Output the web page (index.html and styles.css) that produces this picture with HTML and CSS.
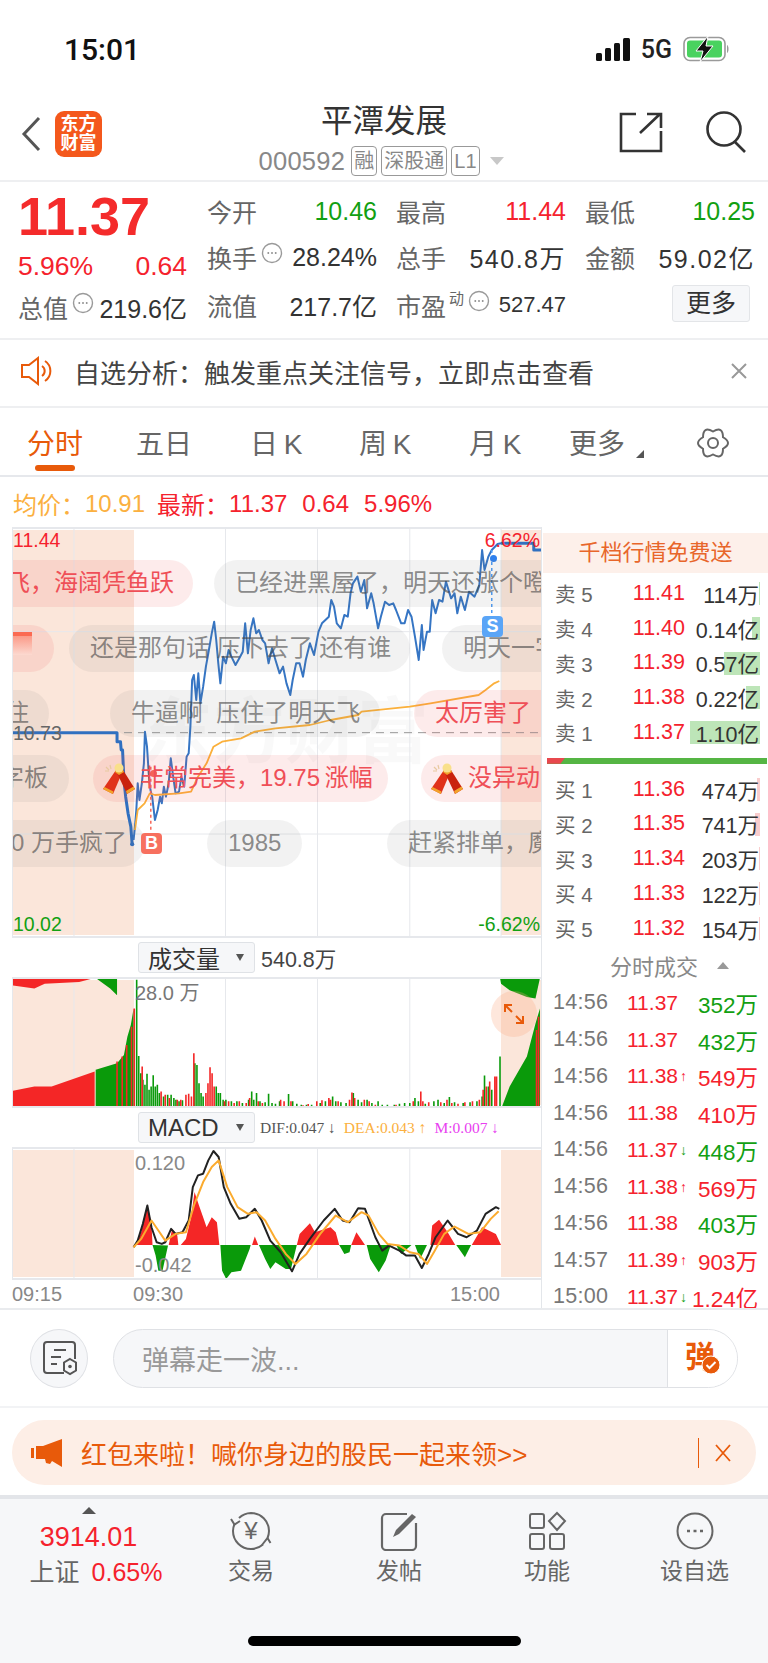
FILE: index.html
```html
<!DOCTYPE html>
<html lang="zh-CN">
<head>
	<meta charset="UTF-8">
	<title>平潭发展</title>
	<link rel="stylesheet" href="styles.css">
</head>
<body>
	<svg class="defs" width="0" height="0">
		<symbol id="dots" viewBox="0 0 22 22">
			<circle cx="11" cy="11" r="9.5" fill="none" stroke="#9a9a9a" stroke-width="1.4"/>
			<path d="M6.5 11h1.6M10.2 11h1.6M13.9 11h1.6" stroke="#777" stroke-width="1.6"/>
		</symbol>
		<symbol id="cracker" viewBox="0 0 32 32">
			<path d="M3 4l3 3M7 2l1 4M2 8l4 0" stroke="#e8c9a0" stroke-width="1.2"/>
			<path d="M13 7l6 3-9 21-10-5z" fill="#e0321a"/>
			<path d="M14 10l6-3 12 19-8 5z" fill="#c9220e"/>
			<path d="M1.500 24l9 4.500-1 2.500-9.500-5zM23 28l7.500-4.500 1.500 2.500-8 5z" fill="#f2a32c"/>
			<path d="M12 9l4 3 5-3-1-2h-7z" fill="#f2a32c"/>
			<circle cx="16" cy="5" r="4.500" fill="#f9e08a"/>
		</symbol>
	</svg>

	<!-- 状态栏 -->
	<div class="status">
		<span class="status-time">15:01</span>
		<svg class="signal" width="35" height="23" viewBox="0 0 35 23">
			<rect x="0" y="15" width="6" height="8" rx="1.5"/>
			<rect x="9" y="10" width="6" height="13" rx="1.5"/>
			<rect x="18" y="5" width="6" height="18" rx="1.5"/>
			<rect x="27" y="0" width="7" height="23" rx="1.5"/>
		</svg>
		<span class="status-net">5G</span>
		<svg class="battery" width="47" height="26" viewBox="0 0 47 26">
			<rect x="1" y="1.500" width="41" height="23" rx="6" fill="none" stroke="#9a9a9a" stroke-width="1.6"/>
			<rect x="4" y="4.500" width="35" height="17" rx="3" fill="#49d25f"/>
			<path d="M44 9c2 .5 2 7.500 0 8z" fill="#9a9a9a"/>
			<path d="M25 0L13 15h7l-3 11 13-16h-7z" fill="#111" stroke="#fff" stroke-width="1"/>
		</svg>
	</div>

	<!-- 顶部导航 -->
	<div class="nav">
		<svg class="nav-back" width="22" height="36" viewBox="0 0 22 36">
			<path d="M19 2L4 18l15 16" fill="none" stroke="#555" stroke-width="3"/>
		</svg>
		<div class="nav-logo">东方<br>财富</div>
		<div class="nav-title">
			<h1>平潭发展</h1>
			<div class="nav-sub">
				<span class="nav-code">000592</span>
				<span class="tag">融</span>
				<span class="tag">深股通</span>
				<span class="tag">L1</span>
				<i class="nav-arrow"></i>
			</div>
		</div>
		<svg class="nav-share" width="44" height="42" viewBox="0 0 44 42">
			<path d="M17 3H2v37h40V20M21 22L41 3M28 3h14v14" fill="none" stroke="#333" stroke-width="2.600"/>
		</svg>
		<svg class="nav-search" width="44" height="42" viewBox="0 0 44 42">
			<circle cx="20" cy="18" r="16.500" fill="none" stroke="#333" stroke-width="2.600"/>
			<path d="M31 31l10 10" stroke="#333" stroke-width="2.600"/>
		</svg>
	</div>

	<!-- 行情 -->
	<div class="quote">
		<div class="quote-main">
			<div class="quote-price">11.37</div>
			<div class="quote-change"><span>5.96%</span><span>0.64</span></div>
			<div class="cell cell-total"><span class="lbl">总值</span><svg class="dots"><use href="#dots"/></svg><span class="val">219.6亿</span></div>
		</div>
		<div class="quote-grid">
			<div class="cell"><span class="lbl">今开</span><span class="val down">10.46</span></div>
			<div class="cell"><span class="lbl">最高</span><span class="val up">11.44</span></div>
			<div class="cell"><span class="lbl">最低</span><span class="val down">10.25</span></div>
			<div class="cell"><span class="lbl">换手</span><svg class="dots"><use href="#dots"/></svg><span class="val">28.24%</span></div>
			<div class="cell"><span class="lbl">总手</span><span class="val val-wide">540.8万</span></div>
			<div class="cell"><span class="lbl">金额</span><span class="val val-wide">59.02亿</span></div>
			<div class="cell"><span class="lbl">流值</span><span class="val">217.7亿</span></div>
			<div class="cell"><span class="lbl">市盈</span><sup class="lbl-sup">动</sup><svg class="dots"><use href="#dots"/></svg><span class="val val-small">527.47</span></div>
			<div class="cell cell-more"><span class="more-btn">更多</span></div>
		</div>
	</div>

	<!-- 提示 -->
	<div class="notice">
		<svg class="notice-icon" width="35" height="30" viewBox="0 0 35 30">
			<path d="M2 9h7l9-7v26l-9-7H2z" fill="none" stroke="#e85a0a" stroke-width="2"/>
			<path d="M22 10a6 6 0 010 10M25 5a12 12 0 010 20" fill="none" stroke="#e85a0a" stroke-width="2"/>
		</svg>
		<span class="notice-text">自选分析：触发重点关注信号，立即点击查看</span>
		<svg class="notice-close" width="18" height="18" viewBox="0 0 18 18">
			<path d="M2 2l14 14M16 2L2 16" stroke="#999" stroke-width="2"/>
		</svg>
	</div>

	<!-- 周期切换 -->
	<div class="tabs">
		<span class="tab tab-on">分时</span>
		<span class="tab tab-5">五日</span>
		<span class="tab tab-k tab-d">日 K</span>
		<span class="tab tab-k tab-w">周 K</span>
		<span class="tab tab-k tab-m">月 K</span>
		<span class="tab tab-x">更多</span>
		<i class="tab-corner"></i>
		<svg class="tab-gear" width="34" height="34" viewBox="0 0 34 34">
			<path d="M17 5.500Q27 -.3 27 11.250Q37 17 27 22.750Q27 34.300 17 28.500Q7 34.300 7 22.750Q-3 17 7 11.250Q7 -.3 17 5.500z" fill="none" stroke="#666" stroke-width="2"/>
			<circle cx="17" cy="17" r="5" fill="none" stroke="#666" stroke-width="2"/>
		</svg>
	</div>

	<div class="info">
		<span class="avg">均价：</span><span class="avg info-num">10.91</span>
		<span class="up info-new">最新：</span><span class="up info-num">11.37</span>
		<span class="up info-gap">0.64</span><span class="up info-gap">5.96%</span>
	</div>

	<div class="board">
		<div class="charts">
			<!-- 分时图 -->
			<div class="chart chart-main">
				<i class="zone zone-l"></i><i class="zone zone-r"></i>
				<div class="watermark">东方财富</div>
				<svg class="plot" viewBox="35 21 1536 1233" preserveAspectRatio="none">
					<g class="grid-line">
						<path d="M215 21V1254M655 21V1254M922 21V1254M1190 21V1254M1455 21V1254M35 335H1571M35 942H1571"/>
					</g>
					<path class="mid-line" d="M35 638H1571"/>
					<path class="line-thick" d="M36 638H340V665H350L352 690H356L360 780 365 830 372 880 380 920 384 975"/>
					<circle cx="384" cy="973" r="6" fill="#3070c0"/>
					<path class="line-price" d="M388 960L392 920 396 870 400 790 405 840 412 790 418 730 421 635 427 680 432 760 437 810 442 830 450 900 458 870 465 830 470 850 476 800 482 830 490 790 496 715 503 770 510 820 520 815 527 770 535 800 542 710 548 700 553 620 558 480 563 465 570 540 576 460 582 550 590 500 598 440 605 400 615 340 622 305 628 360 634 430 640 490 648 410 656 430 664 390 672 410 684 435 695 415 705 395 712 310 720 400 728 330 736 295 744 340 752 330 762 360 770 370 780 430 790 385 800 420 812 460 822 440 832 490 843 525 850 480 860 430 870 430 880 470 888 420 900 370 912 405 925 335 935 310 945 300 955 290 962 240 970 260 978 310 990 325 1000 285 1010 290 1018 220 1025 190 1038 170 1048 215 1058 180 1066 265 1078 220 1085 250 1098 325 1106 290 1118 245 1130 255 1142 250 1150 270 1165 310 1175 310 1185 270 1195 290 1205 350 1216 420 1225 315 1230 390 1240 335 1248 335 1255 240 1265 280 1275 240 1285 245 1295 185 1310 235 1320 220 1328 280 1338 230 1350 270 1362 215 1378 230 1392 195 1400 90 1407 150 1418 110 1428 90 1445 72 1455 70"/>
					<path class="line-thick" d="M1455 70H1550V90H1571"/>
					<path class="line-avg" d="M392 930L400 870 420 850 435 820 450 825 520 820 555 815 575 770 600 730 620 680 645 665 700 655 740 635 800 625 900 615 960 600 1040 585 1050 575 1190 560 1250 550 1390 525 1410 510 1435 490 1450 483"/>
					<path class="mark-sell" d="M1428 90V285"/>
					<path class="mark-buy" d="M438 740V935"/>
				</svg>
				<i class="dot dot-s"></i><i class="dot dot-b"></i>
				<span class="flag flag-s">S</span>
				<span class="flag flag-b">B</span>
				<span class="axis up axis-tl">11.44</span>
				<span class="axis axis-ml">10.73</span>
				<span class="axis down axis-bl">10.02</span>
				<span class="axis up axis-tr">6.62%</span>
				<span class="axis down axis-br">-6.62%</span>
				<!-- 弹幕 -->
				<div class="dm dm-red p1">飞，海阔凭鱼跃</div>
				<div class="dm p2">已经进黑屋了，明天还涨个噔</div>
				<div class="dm dm-red p3"><i class="dm-gift"></i></div>
				<div class="dm p4">还是那句话 压下去了 还有谁</div>
				<div class="dm p5">明天一字</div>
				<div class="dm p6">住</div>
				<div class="dm p7">牛逼啊&nbsp;&nbsp;压住了明天飞</div>
				<div class="dm dm-red p8">太厉害了</div>
				<div class="dm p9">字板</div>
				<div class="dm dm-red p10"><svg class="dm-icon"><use href="#cracker"/></svg>非常完美，19.75&#8201;涨幅</div>
				<div class="dm dm-red p11"><svg class="dm-icon"><use href="#cracker"/></svg>没异动的</div>
				<div class="dm p12">10 万手疯了</div>
				<div class="dm p13">1985</div>
				<div class="dm p14">赶紧排单，魔</div>
			</div>

			<div class="sub-head">
				<div class="select"><span>成交量</span><i></i></div>
				<span class="sub-val">540.8万</span>
			</div>

			<!-- 成交量 -->
			<div class="chart chart-vol">
				<i class="zone zone-l"></i><i class="zone zone-r"></i>
				<svg class="plot" viewBox="35 140 1536 395" preserveAspectRatio="none">
					<path class="grid-line" d="M215 140V535M655 140V535M922 140V535M1190 140V535"/>
					<path fill="#f42626" d="M36 143H275L230 155 130 160 100 175 36 165zM36 483L100 470H150L275 425V530H36z"/>
					<path fill="#0a9a0a" d="M278 143H340V195L320 175zM278 420L340 400 360 375 370 320 380 285 388 235V530H278zM1452 143H1568L1555 205 1530 200 1480 180 1455 160zM1458 530L1480 470 1530 380 1555 280 1568 235V530z"/>
					<path class="bar-red" d="M340 530V395M355 530V380M368 530V345M382 530V290M1558 530V300M1564 530V260"/>
					<path class="bar-green" d="M397 530V148M403 530V378M409 530V430M415 530V450M421 530V465M427 530V432M433 530V480M439 530V470M445 530V436M451 530V470M457 530V465M463 530V490M475 530V500M487 530V495M497 530V495M505 530V505M511 530V510M520 530V515M530 530V512M566 530V400M572 530V405M578 530V460M584 530V490M590 530V500M628 530V470M634 530V490M640 530V490M648 530V510M656 530V510M672 530V515M688 530V515M704 530V520M722 530V510M731 530V485M737 530V510M745 530V490M755 530V515M770 530V518M780 530V492M790 530V520M800 530V522M812 530V515M838 530V493M850 530V515M862 530V522M875 530V525M890 530V525M905 530V525M930 530V520M945 530V515M966 530V500M975 530V515M990 530V518M1005 530V520M1026 530V490M1040 530V510M1050 530V518M1066 530V510M1080 530V520M1098 530V515M1110 530V525M1125 530V525M1145 530V525M1160 530V522M1175 530V520M1190 530V520M1205 530V505M1215 530V515M1235 530V522M1260 530V515M1272 530V510M1290 530V520M1305 530V502M1320 530V518M1345 530V520M1365 530V518M1385 530V515M1400 530V500M1407 530V437M1418 530V470M1428 530V480M1452 530V380"/>
					<path class="bar-red" d="M390 530V235M413 530V410M468 530V485M480 530V495M492 530V505M515 530V510M525 530V510M540 530V495M548 530V492M556 530V500M563 530V370M598 530V490M604 530V460M610 530V412M616 530V430M622 530V470M652 530V515M664 530V515M680 530V520M695 530V515M715 530V520M725 530V505M750 530V515M762 530V520M815 530V510M825 530V515M845 530V515M880 530V527M895 530V523M920 530V515M935 530V512M955 530V505M960 530V510M982 530V515M1015 530V510M1022 530V488M1030 530V505M1058 530V510M1072 530V515M1090 530V525M1150 530V525M1200 530V515M1222 530V485M1228 530V515M1245 530V518M1280 530V518M1298 530V510M1312 530V520M1330 530V522M1350 530V518M1372 530V515M1392 530V510M1403 530V480M1412 530V470M1422 530V455M1437 530V440M1442 530V440"/>
				</svg>
				<span class="axis axis-top">28.0 万</span>
				<div class="expand">
					<svg width="24" height="24" viewBox="0 0 24 24">
						<path d="M3 10V3h7M3 3l7 7M21 14v7h-7M21 21l-7-7" fill="none" stroke="#e85a0a" stroke-width="2"/>
					</svg>
				</div>
			</div>

			<div class="sub-head">
				<div class="select"><span>MACD</span><i></i></div>
				<div class="macd-vals">
					<span class="dif">DIF:0.047 ↓</span>
					<span class="dea">DEA:0.043 ↑</span>
					<span class="mm">M:0.007 ↓</span>
				</div>
			</div>

			<!-- MACD -->
			<div class="chart chart-macd">
				<i class="zone zone-l"></i><i class="zone zone-r"></i>
				<svg class="plot" viewBox="35 650 1536 398" preserveAspectRatio="none">
					<path class="grid-line" d="M215 650V1048M655 650V1048M922 650V1048M1190 650V1048"/>
					<path fill="#f42626" d="M395 943L410 905 428 822 440 880 443 943zM490 943L500 895 515 915 518 943zM525 943L540 925 555 860 565 785 578 825 590 860 600 890 615 860 630 875 637 943zM732 943L740 918 750 943zM862 943L870 910 900 878 915 905 930 900 960 890 975 905 985 943zM1020 943L1035 905 1060 943zM1250 943L1255 885 1275 868 1300 905 1322 943zM1370 943L1400 890 1440 910 1455 943z"/>
					<path fill="#0a9a0a" d="M443 943L452 975 460 1020 472 1020 488 945zM640 943L645 1020 657 1045 672 1025 700 1020 725 955 728 943zM752 943L770 985 785 1015 800 995 830 1015 845 1015 862 943zM985 943L1000 970 1015 965 1020 943zM1065 943L1075 985 1100 1025 1120 990 1135 943zM1150 943L1165 970 1195 943zM1205 943L1220 985 1240 943zM1325 943L1350 980 1368 943z"/>
					<path class="line-dif" d="M388 950L400 930 415 880 428 825 440 890 455 935 470 940 480 935 497 895 510 910 530 905 548 870 560 770 575 735 590 730 605 690 620 662 635 680 650 770 670 820 695 865 715 860 740 835 760 870 785 930 815 965 848 1022 870 970 900 925 940 870 972 835 995 870 1015 875 1040 833 1060 835 1090 920 1110 960 1130 945 1160 960 1180 975 1205 975 1225 1012 1245 970 1265 920 1300 870 1330 910 1355 920 1385 900 1410 850 1440 830 1450 835"/>
					<path class="line-dea" d="M388 950L410 925 440 870 460 900 480 930 510 910 540 905 565 820 590 755 615 710 635 690 660 770 690 830 720 850 745 845 770 870 800 925 830 970 858 1000 890 970 930 910 975 855 1010 875 1050 845 1070 855 1100 910 1125 940 1160 945 1190 965 1215 970 1240 1000 1260 965 1290 910 1320 888 1360 910 1395 905 1425 865 1448 842"/>
				</svg>
				<span class="axis axis-m1">0.120</span>
				<span class="axis axis-m2">-0.042</span>
			</div>

			<div class="times"><span>09:15</span><span>09:30</span><span class="time-end">15:00</span></div>
		</div>

		<!-- 盘口 -->
		<div class="side">
			<div class="promo">千档行情免费送</div>
			<div class="ob ob-sell">
				<div class="ob-row"><i class="ob-bar bar-g" style="width:1px"></i><span class="ob-l">卖 5</span><span class="up">11.41</span><span class="ob-v">114万</span></div>
				<div class="ob-row"><i class="ob-bar bar-g" style="width:8px"></i><span class="ob-l">卖 4</span><span class="up">11.40</span><span class="ob-v">0.14亿</span></div>
				<div class="ob-row"><i class="ob-bar bar-g" style="width:36px"></i><span class="ob-l">卖 3</span><span class="up">11.39</span><span class="ob-v">0.57亿</span></div>
				<div class="ob-row"><i class="ob-bar bar-g" style="width:14px"></i><span class="ob-l">卖 2</span><span class="up">11.38</span><span class="ob-v">0.22亿</span></div>
				<div class="ob-row"><i class="ob-bar bar-g" style="width:70px"></i><span class="ob-l">卖 1</span><span class="up">11.37</span><span class="ob-v">1.10亿</span></div>
			</div>
			<div class="spread"><i></i></div>
			<div class="ob">
				<div class="ob-row"><i class="ob-bar bar-r" style="width:3px"></i><span class="ob-l">买 1</span><span class="up">11.36</span><span class="ob-v">474万</span></div>
				<div class="ob-row"><i class="ob-bar bar-r" style="width:5px"></i><span class="ob-l">买 2</span><span class="up">11.35</span><span class="ob-v">741万</span></div>
				<div class="ob-row"><i class="ob-bar bar-r" style="width:1px"></i><span class="ob-l">买 3</span><span class="up">11.34</span><span class="ob-v">203万</span></div>
				<div class="ob-row"><i class="ob-bar bar-r" style="width:1px"></i><span class="ob-l">买 4</span><span class="up">11.33</span><span class="ob-v">122万</span></div>
				<div class="ob-row"><i class="ob-bar bar-r" style="width:1px"></i><span class="ob-l">买 5</span><span class="up">11.32</span><span class="ob-v">154万</span></div>
			</div>
			<div class="ticks-head">分时成交<i></i></div>
			<div class="ticks">
				<div class="tick"><span class="tick-t">14:56</span><span class="up">11.37</span><span></span><span class="tick-v down">352万</span></div>
				<div class="tick"><span class="tick-t">14:56</span><span class="up">11.37</span><span></span><span class="tick-v down">432万</span></div>
				<div class="tick"><span class="tick-t">14:56</span><span class="up">11.38</span><span class="up tick-a">↑</span><span class="tick-v up">549万</span></div>
				<div class="tick"><span class="tick-t">14:56</span><span class="up">11.38</span><span></span><span class="tick-v up">410万</span></div>
				<div class="tick"><span class="tick-t">14:56</span><span class="up">11.37</span><span class="down tick-a">↓</span><span class="tick-v down">448万</span></div>
				<div class="tick"><span class="tick-t">14:56</span><span class="up">11.38</span><span class="up tick-a">↑</span><span class="tick-v up">569万</span></div>
				<div class="tick"><span class="tick-t">14:56</span><span class="up">11.38</span><span></span><span class="tick-v down">403万</span></div>
				<div class="tick"><span class="tick-t">14:57</span><span class="up">11.39</span><span class="up tick-a">↑</span><span class="tick-v up">903万</span></div>
				<div class="tick"><span class="tick-t">15:00</span><span class="up">11.37</span><span class="down tick-a">↓</span><span class="tick-v up">1.24亿</span></div>
			</div>
		</div>
	</div>

	<!-- 弹幕输入 -->
	<div class="comment">
		<div class="comment-set">
			<svg width="36" height="36" viewBox="0 0 36 36">
				<path d="M23 33H6a3 3 0 01-3-3V5a3 3 0 013-3h25a3 3 0 013 3v14" fill="none" stroke="#555" stroke-width="2"/>
				<path d="M13 10h12M10 17h10M10 24h6" stroke="#555" stroke-width="2"/>
				<path d="M29 19l6 3.500v8L29 34l-6-3.500v-8z" fill="none" stroke="#555" stroke-width="2"/>
				<circle cx="29" cy="26.500" r="1.800" fill="#555"/>
			</svg>
		</div>
		<div class="comment-box">
			<span class="comment-hint">弹幕走一波...</span>
			<span class="comment-send">弹<svg width="20" height="20" viewBox="0 0 20 20"><circle cx="10" cy="10" r="9" fill="#e85a0a" stroke="#fff" stroke-width="1"/><path d="M5.500 10l3 3 6-6" fill="none" stroke="#fff" stroke-width="2"/></svg></span>
		</div>
	</div>

	<!-- 红包 -->
	<div class="banner-wrap">
		<div class="banner">
			<svg class="banner-icon" width="32" height="28" viewBox="0 0 32 28">
				<path d="M0 9h3v10H0zM5 7h7L31 0v28l-10-6-2 3-4-1-1-4H5z" fill="#e85a0a"/>
			</svg>
			<span class="banner-text">红包来啦！喊你身边的股民一起来领&gt;&gt;</span>
			<i class="banner-sep"></i>
			<svg width="16" height="18" viewBox="0 0 16 18">
				<path d="M1 1l14 16M15 1L1 17" stroke="#e85a0a" stroke-width="1.800"/>
			</svg>
		</div>
	</div>

	<!-- 底部 -->
	<div class="foot">
		<div class="foot-index">
			<i></i>
			<div class="foot-point">3914.01</div>
			<div class="foot-pct"><span>上证</span><b>0.65%</b></div>
		</div>
		<div class="foot-item">
			<svg width="44" height="40" viewBox="0 0 44 40">
				<path d="M10 7A18 18 0 0122 2a18 18 0 0118 18 18 18 0 01-1.500 7M34 33.500A18 18 0 0122 38 18 18 0 014 20a18 18 0 011.500-7" fill="none" stroke="#666" stroke-width="2"/>
				<path d="M2 8l3.500 5.500L11 10M33 34l5.500-7 3 5" fill="none" stroke="#666" stroke-width="2"/>
				<text x="22" y="28" text-anchor="middle" class="yen">¥</text>
			</svg>
			<span>交易</span>
		</div>
		<div class="foot-item">
			<svg width="44" height="40" viewBox="0 0 44 40">
				<path d="M30 3H9a4 4 0 00-4 4v28a4 4 0 004 4h26a4 4 0 004-4V12" fill="none" stroke="#666" stroke-width="2.200"/>
				<path d="M16 26L19 19 35 3 39 6 22 23z" fill="#666"/>
			</svg>
			<span>发帖</span>
		</div>
		<div class="foot-item">
			<svg width="44" height="40" viewBox="0 0 44 40">
				<rect x="5" y="3" width="14" height="14" rx="2" fill="none" stroke="#666" stroke-width="2"/>
				<rect x="5" y="23" width="14" height="15" rx="2" fill="none" stroke="#666" stroke-width="2"/>
				<rect x="25" y="23" width="14" height="15" rx="2" fill="none" stroke="#666" stroke-width="2"/>
				<path d="M32 2l8 8-8 9-8-9z" fill="none" stroke="#666" stroke-width="2"/>
			</svg>
			<span>功能</span>
		</div>
		<div class="foot-item">
			<svg width="44" height="40" viewBox="0 0 44 40">
				<circle cx="22" cy="20" r="17.500" fill="none" stroke="#666" stroke-width="2"/>
				<path d="M14 20h3M20.500 20h3M27 20h3" stroke="#666" stroke-width="2.600"/>
			</svg>
			<span>设自选</span>
		</div>
		<i class="home-bar"></i>
	</div>
</body>
</html>
```

FILE: styles.css
```css
* {
	box-sizing: border-box;
}
html, body {
	margin: 0;
	padding: 0;
}
body {
	position: relative;
	width: 768px;
	height: 1663px;
	overflow: hidden;
	background: #fff;
	font-family: "Liberation Sans", "Noto Sans CJK SC", sans-serif;
	color: #333;
}
i {
	display: block;
	font-style: normal;
}
.defs {
	position: absolute;
}
.up { color: #f5222d; }
.down { color: #12a012; }

/* 状态栏 */
.status {
	display: flex;
	align-items: center;
	height: 90px;
	padding: 8px 38px 0 64px;
}
.status-time {
	margin-right: auto;
	font-family: Roboto, sans-serif;
	font-size: 30px;
	font-weight: 500;
	color: #111;
}
.signal { fill: #111; }
.status-net {
	margin: 0 11px 0 10px;
	font-family: Roboto, sans-serif;
	font-size: 25px;
	font-weight: 500;
	color: #222;
}

/* 导航 */
.nav {
	position: relative;
	display: flex;
	align-items: center;
	height: 92px;
	padding: 0 22px 0 20px;
	border-bottom: 2px solid #eeeff1;
}
.nav-logo {
	width: 47px;
	height: 46px;
	margin-left: 13px;
	margin-top: -2px;
	padding-top: 4px;
	border-radius: 9px;
	background: #f4581c;
	color: #fff;
	font-size: 18px;
	font-weight: 700;
	line-height: 19px;
	text-align: center;
}
.nav-back {
	margin-top: -2px;
}
.nav-title {
	position: absolute;
	left: 0;
	right: 0;
	top: 12px;
	text-align: center;
}
.nav-title h1 {
	margin: 0;
	font-size: 31.500px;
	font-weight: 400;
	line-height: 38px;
	color: #333;
}
.nav-sub {
	display: flex;
	align-items: center;
	justify-content: center;
	gap: 4px;
	margin-top: 6px;
	padding-right: 6px;
	color: #888;
}
.nav-code {
	margin-right: 2px;
	font-size: 25.500px;
	letter-spacing: .3px;
}
.tag {
	height: 30px;
	padding: 0 2px;
	border: 1px solid #999;
	border-radius: 4px;
	font-size: 20px;
	line-height: 28px;
}
.nav-arrow {
	width: 0;
	height: 0;
	margin-left: 6px;
	border-left: 7px solid transparent;
	border-right: 7px solid transparent;
	border-top: 8px solid #c8c8c8;
}
.nav-share {
	margin-left: auto;
	margin-top: -6px;
}
.nav-search {
	margin-left: 41px;
	margin-right: -2px;
	margin-top: -6px;
}

/* 行情 */
.quote {
	display: flex;
	height: 158px;
	padding: 0 13px 0 18px;
	border-bottom: 2px solid #eeeff1;
}
.quote-main {
	width: 170px;
	margin-right: 20px;
}
.quote-price {
	height: 60px;
	margin-top: 4px;
	font-size: 54px;
	font-weight: 700;
	line-height: 60px;
	color: #f42b2b;
}
.quote-change {
	display: flex;
	justify-content: space-between;
	height: 24px;
	margin-top: 8px;
	font-size: 26.500px;
	line-height: 24px;
	color: #f5222d;
}
.cell {
	display: flex;
	align-items: center;
	font-size: 25px;
	white-space: nowrap;
}
.cell-total {
	margin-top: 10px;
	height: 38px;
}
.quote-grid {
	display: grid;
	flex: 1;
	grid-template-columns: 170px 170px 170px;
	grid-template-rows: 44px 48px 48px;
	column-gap: 19px;
	padding-top: 7px;
}
.lbl { color: #666; }
.lbl-sup {
	margin: -16px 0 0 3px;
	font-size: 15px;
	color: #666;
}
.val {
	margin-left: auto;
	font-size: 25px;
	color: #333;
}
.val.up { color: #f5222d; }
.val.down { color: #12a012; }
.val-wide {
	letter-spacing: 1.500px;
}
.val-small {
	font-size: 22px;
}
.dots {
	width: 22px;
	height: 22px;
	margin: -8px 0 0 4px;
	flex: none;
}
.cell-more {
	justify-content: flex-end;
	padding-right: 5px;
}
.more-btn {
	display: block;
	width: 78px;
	height: 37px;
	margin-top: -3px;
	border: 1px solid #e3e5e8;
	border-radius: 3px;
	background: #f6f7f9;
	font-size: 25px;
	line-height: 35px;
	text-align: center;
}

/* 提示 */
.notice {
	display: flex;
	align-items: center;
	height: 68px;
	padding: 0 20px 4px;
	border-bottom: 2px solid #eeeff1;
}
.notice-text {
	margin-left: 19px;
	font-size: 26px;
	color: #444;
	white-space: nowrap;
}
.notice-close {
	margin-left: auto;
}

/* 周期 */
.tabs {
	position: relative;
	height: 69px;
	border-bottom: 2px solid #e6e8ec;
}
.tab {
	position: absolute;
	top: 17px;
	font-size: 28px;
	line-height: 40px;
	color: #666;
	white-space: nowrap;
}
.tab-k {
	letter-spacing: -1px;
}
.tab-on {
	left: 27px;
	color: #e85a0a;
}
.tab-on::after {
	content: "";
	display: block;
	width: 40px;
	height: 6px;
	margin: 0 0 0 8px;
	border-radius: 3px;
	background: #e85a0a;
}
.tab-5 { left: 136px; }
.tab-d { left: 250px; }
.tab-w { left: 359px; }
.tab-m { left: 469px; }
.tab-x { left: 569px; }
.tab-corner {
	position: absolute;
	left: 636px;
	top: 42px;
	width: 0;
	height: 0;
	border-left: 8px solid transparent;
	border-bottom: 8px solid #555;
}
.tab-gear {
	position: absolute;
	left: 696px;
	top: 18px;
}
.info {
	display: flex;
	align-items: center;
	height: 50px;
	padding: 3px 0 0 13px;
	font-size: 24px;
	white-space: nowrap;
}
.avg { color: #fbb040; }
.info-new { margin-left: 12px; }
.info-gap { margin-left: 15px; }

/* 图表区 */
.board {
	display: flex;
	height: 783px;
	padding-left: 12px;
	border-bottom: 2px solid #e9ebee;
}
.charts {
	width: 529px;
	flex: none;
}
.chart {
	position: relative;
	overflow: hidden;
	border-left: 1px solid #e6e8ec;
}
.chart-main {
	height: 411px;
	border-top: 2px solid #e6e8ec;
	border-bottom: 2px solid #e6e8ec;
}
.chart-vol {
	height: 131px;
	border-top: 2px solid #e6e8ec;
	border-bottom: 2px solid #e6e8ec;
}
.chart-macd {
	height: 133px;
	border-top: 2px solid #e6e8ec;
	border-bottom: 2px solid #e6e8ec;
}
.zone {
	position: absolute;
	top: 1px;
	bottom: 1px;
	background: #fbe6da;
}
.zone-l {
	left: 0;
	width: 121px;
}
.zone-r {
	left: 488px;
	right: 0;
}
.plot {
	position: absolute;
	left: -1px;
	top: -2px;
	width: 529px;
	height: calc(100% + 4px);
}
.plot path {
	vector-effect: non-scaling-stroke;
	stroke-linejoin: round;
}
.grid-line, .grid-line path {
	fill: none;
	stroke: #e6e8ec;
	stroke-width: 1;
}
.mid-line {
	fill: none;
	stroke: #999;
	stroke-width: 1;
	stroke-dasharray: 8 6;
}
.line-thick {
	fill: none;
	stroke: #3070c0;
	stroke-width: 3;
}
.line-price {
	fill: none;
	stroke: #3575c4;
	stroke-width: 2;
}
.line-avg {
	fill: none;
	stroke: #fbb03b;
	stroke-width: 1.800;
}
.mark-sell {
	stroke: #4d9bf5;
	stroke-width: 1.500;
	stroke-dasharray: 3 3;
}
.mark-buy {
	stroke: #f7665a;
	stroke-width: 1.500;
	stroke-dasharray: 3 3;
}
.bar-green {
	fill: none;
	stroke: #0a9a0a;
	stroke-width: 1.600;
}
.bar-red {
	fill: none;
	stroke: #f42626;
	stroke-width: 1.600;
}
.line-dif {
	fill: none;
	stroke: #222;
	stroke-width: 2;
}
.line-dea {
	fill: none;
	stroke: #fbab2e;
	stroke-width: 2;
}
.watermark {
	position: absolute;
	left: 128px;
	top: 158px;
	font-size: 72px;
	font-weight: 700;
	line-height: 90px;
	color: rgba(0, 0, 0, .025);
	white-space: nowrap;
}
.dot {
	position: absolute;
	width: 7px;
	height: 7px;
	border-radius: 50%;
}
.dot-s { left: 477px; top: 26px; background: #2f80ed; }
.dot-b { left: 137px; top: 241px; background: #f7665a; }
.flag {
	position: absolute;
	z-index: 3;
	width: 21px;
	height: 21px;
	border-radius: 4px;
	color: #fff;
	font-size: 18px;
	font-weight: 700;
	line-height: 21px;
	text-align: center;
}
.flag-s { left: 469px; top: 87px; background: #5aa5f7; }
.flag-b { left: 128px; top: 304px; background: #f7705f; }
.axis {
	position: absolute;
	z-index: 2;
	font-size: 19.500px;
	line-height: 22px;
	color: #888;
	white-space: nowrap;
}
.axis.up { color: #f5222d; }
.axis.down { color: #12a012; }
.axis-tl { left: 0; top: 0; }
.axis-ml { left: 0; top: 193px; color: #666; }
.axis-bl { left: 0; top: 384px; }
.axis-tr { right: 1px; top: 0; }
.axis-br { right: 1px; top: 384px; }
.axis-top { left: 122px; top: 3px; font-size: 20px; color: #777; }
.axis-m1 { left: 122px; top: 3px; font-size: 20px; }
.axis-m2 { left: 122px; top: 105px; font-size: 20px; }

/* 弹幕 */
.dm {
	position: absolute;
	z-index: 1;
	height: 47px;
	padding: 0 21px;
	border-radius: 24px;
	overflow: hidden;
	background: rgba(110, 110, 110, .09);
	color: rgba(70, 70, 70, .62);
	font-size: 24px;
	line-height: 46px;
	white-space: nowrap;
}
.dm-red {
	background: rgba(240, 70, 70, .11);
	color: #ef4f57;
}
.dm-icon {
	display: inline-block;
	width: 32px;
	height: 32px;
	margin: 0 5px 0 -11px;
	vertical-align: -9px;
}
.dm-gift {
	position: absolute;
	left: 30px;
	top: 7px;
	width: 19px;
	height: 23px;
	background: linear-gradient(#fb6a52 0 4px, #fb9a88 4px, #fcd9d0);
}
.p1 { left: -28px; top: 31px; width: 208px; }
.p2 { left: 201px; top: 31px; width: 400px; }
.p3 { left: -30px; top: 96px; width: 71px; }
.p4 { left: 56px; top: 96px; width: 341px; }
.p5 { left: 429px; top: 96px; width: 200px; }
.p6 { left: -29px; top: 161px; width: 65px; }
.p7 { left: 97px; top: 161px; width: 270px; }
.p8 { left: 401px; top: 161px; width: 200px; }
.p9 { left: -34px; top: 226px; width: 90px; }
.p10 { left: 80px; top: 226px; width: 295px; }
.p11 { left: 408px; top: 226px; width: 200px; }
.p12 { left: -68px; top: 291px; width: 200px; padding-right: 18px; text-align: right; }
.p13 { left: 194px; top: 291px; width: 95px; }
.p14 { left: 374px; top: 291px; width: 250px; }

.sub-head {
	display: flex;
	align-items: center;
	height: 39px;
	padding-left: 126px;
}
.select {
	display: flex;
	align-items: center;
	justify-content: space-between;
	width: 117px;
	height: 31px;
	padding: 0 10px 0 9px;
	border: 1px solid #dfe2e6;
	border-radius: 3px;
	background: #f6f7f9;
	font-size: 24px;
	color: #333;
}
.select i {
	width: 0;
	height: 0;
	border-left: 4px solid transparent;
	border-right: 4px solid transparent;
	border-top: 7px solid #555;
}
.sub-val {
	margin-left: 6px;
	font-size: 21.500px;
	color: #444;
}
.macd-vals {
	display: flex;
	margin-left: 5px;
	font-family: "Liberation Serif", serif;
	font-size: 15.500px;
	white-space: nowrap;
}
.dif { color: #555; }
.dea { margin-left: 8px; color: #fbb040; }
.mm { margin-left: 8px; color: #e83ff0; }
.expand {
	position: absolute;
	z-index: 2;
	left: 478px;
	top: 12px;
	display: flex;
	align-items: center;
	justify-content: center;
	width: 46px;
	height: 46px;
	border-radius: 50%;
	background: rgba(250, 170, 130, .28);
}
.times {
	position: relative;
	display: flex;
	height: 28px;
	font-size: 20px;
	line-height: 28px;
	color: #888;
}
.times span:nth-child(2) {
	margin-left: 71px;
}
.time-end {
	margin-left: auto;
	margin-right: 41px;
}

/* 盘口 */
.side {
	flex: 1;
	overflow: hidden;
	border-left: 1px solid #e3e6ea;
}
.promo {
	height: 40px;
	margin: 6px 0 3px 1px;
	background: #fdf0ea;
	color: #e8662a;
	font-size: 22px;
	line-height: 40px;
	text-align: center;
}
.ob-row {
	position: relative;
	display: grid;
	grid-template-columns: 42px 88px 1fr;
	align-items: center;
	height: 34.750px;
	padding: 0 9px 0 13px;
	font-size: 21.500px;
	text-align: right;
	white-space: nowrap;
}
.ob-row span {
	position: relative;
}
.ob-row .ob-l {
	font-size: 20.500px;
	color: #666;
	text-align: left;
}
.ob-v {
	color: #333;
}
.ob-bar {
	position: absolute;
	right: 8px;
	top: 6px;
	height: 23px;
}
.bar-g { background: #bde5b8; }
.bar-r { background: #f9cdcd; }
.spread {
	height: 6px;
	margin: 8px 1px 8px 5px;
	background: #55b544;
}
.spread i {
	width: 18px;
	height: 6px;
	background: #e8484e;
	clip-path: polygon(0 0, 100% 0, 75% 100%, 0 100%);
}
.ticks-head {
	display: flex;
	align-items: center;
	height: 39px;
	padding-left: 68px;
	font-size: 22px;
	color: #888;
}
.ticks-head i {
	width: 0;
	height: 0;
	margin-left: 19px;
	border-left: 6px solid transparent;
	border-right: 6px solid transparent;
	border-bottom: 7px solid #999;
}
.tick {
	display: grid;
	grid-template-columns: 74px 53px 12px 1fr;
	align-items: center;
	height: 36.750px;
	padding: 0 10px 0 11px;
	font-size: 21px;
	white-space: nowrap;
}
.tick-t {
	color: #777;
	font-size: 21.500px;
	letter-spacing: .3px;
}
.tick-a {
	font-size: 14px;
}
.tick-v {
	font-size: 22.500px;
	text-align: right;
}

/* 输入 */
.comment {
	display: flex;
	align-items: center;
	height: 98px;
	padding: 0 30px;
	border-bottom: 2px solid #f2f3f5;
}
.comment-set {
	display: flex;
	align-items: center;
	justify-content: center;
	width: 58px;
	height: 59px;
	border: 1px solid #dfe1e5;
	border-radius: 50%;
	background: #f6f7f9;
}
.comment-box {
	display: flex;
	align-items: center;
	justify-content: space-between;
	width: 625px;
	height: 59px;
	margin-left: 25px;
	padding-left: 28px;
	overflow: hidden;
	border: 1px solid #dfe1e5;
	border-radius: 30px;
	background: #f6f7f9;
}
.comment-hint {
	font-size: 27px;
	color: #999;
}
.comment-send {
	position: relative;
	width: 70px;
	height: 59px;
	padding-left: 17px;
	border-left: 1px solid #dfe1e5;
	background: #fff;
	color: #e85a0a;
	font-size: 30px;
	font-weight: 700;
	line-height: 56px;
}
.comment-send svg {
	position: absolute;
	left: 33px;
	top: 26px;
}

/* 红包 */
.banner-wrap {
	height: 91px;
	padding: 12px 12px 0;
	border-bottom: 4px solid #e3e5e9;
}
.banner {
	display: flex;
	align-items: center;
	height: 65px;
	padding: 0 25px 0 19px;
	border-radius: 33px;
	background: #fdeee6;
}
.banner-text {
	margin-left: 18px;
	font-size: 26px;
	color: #e85a0a;
	white-space: nowrap;
}
.banner-sep {
	width: 1px;
	height: 30px;
	margin-left: auto;
	margin-right: 16px;
	background: #e85a0a;
}

/* 底部 */
.foot {
	position: relative;
	display: grid;
	grid-template-columns: 177px 148px 148px 148px 147px;
	height: 164px;
	padding-top: 12px;
	background: #f6f7f9;
}
.foot-index {
	text-align: center;
}
.foot-index i {
	width: 0;
	height: 0;
	margin: -4px auto 0;
	border-left: 7px solid transparent;
	border-right: 7px solid transparent;
	border-bottom: 7px solid #555;
}
.foot-point {
	margin-top: 6px;
	font-size: 27px;
	line-height: 34px;
	color: #f5222d;
}
.foot-pct {
	margin: 0 0 0 15px;
	font-size: 25px;
	line-height: 36px;
	color: #666;
	white-space: nowrap;
}
.foot-pct b {
	margin-left: 12px;
	font-weight: 400;
	color: #f5222d;
}
.foot-item {
	display: flex;
	flex-direction: column;
	align-items: center;
	font-size: 23px;
	color: #666;
}
.foot-item svg {
	margin-bottom: 1px;
}
.yen {
	font-family: "Liberation Sans", sans-serif;
	font-size: 24px;
	fill: #666;
}
.home-bar {
	position: absolute;
	left: 248px;
	top: 137px;
	width: 273px;
	height: 10px;
	border-radius: 5px;
	background: #000;
}
```
